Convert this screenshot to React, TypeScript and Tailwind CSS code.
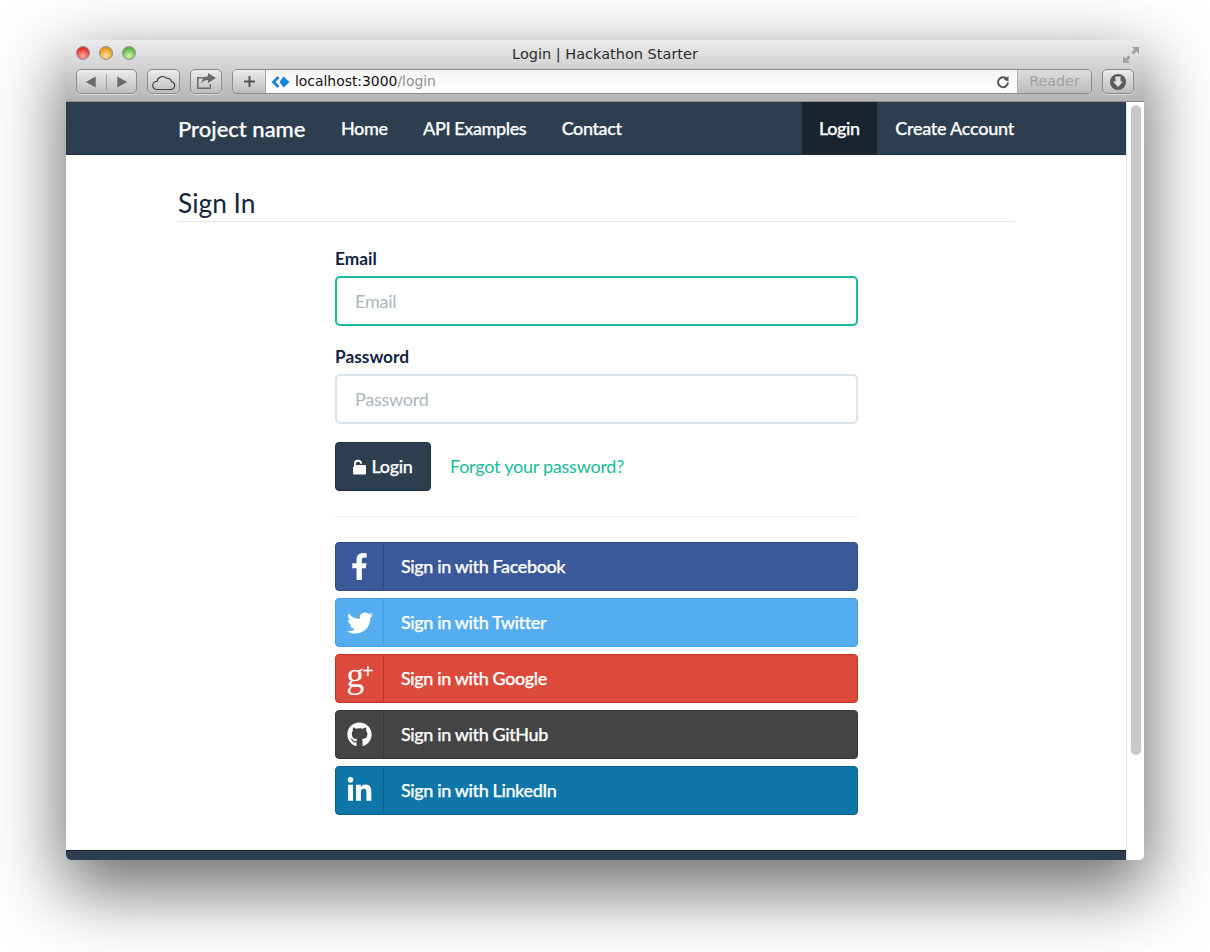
import React from "react";
import { FaFacebookF, FaTwitter, FaGithub, FaLinkedinIn } from "react-icons/fa";

const ui = "font-['DejaVu_Sans',sans-serif]";

function Tool({ className, children }: { className: string; children: React.ReactNode }) {
  return (
    <div className={`h-[25px] flex items-center justify-center rounded-[5px] border border-[#8a8a8a] bg-gradient-to-b from-[#ececec] to-[#bdbdbd] shadow-[0_1px_0_rgba(255,255,255,0.5)] ${className}`}>
      {children}
    </div>
  );
}

function Dot({ c }: { c: string }) {
  return <span className={`w-[14px] h-[14px] rounded-full border border-[#8f8f8f] ${c}`} />;
}

function Social({ color, border, icon, label }: { color: string; border: string; icon: React.ReactNode; label: string }) {
  return (
    <a className={`flex h-[49px] items-center rounded-[4px] border text-white text-[18px] font-medium tracking-[-0.38px] [-webkit-text-stroke:0.25px_white] ${color} ${border}`}>
      <span className={`w-[48px] h-full shrink-0 flex items-center justify-center border-r [-webkit-text-stroke:0] ${border}`}>{icon}</span>
      <span className="pl-[17px]">{label}</span>
    </a>
  );
}

function Field({ label, placeholder, focus }: { label: string; placeholder: string; focus?: boolean }) {
  return (
    <div>
      <div className="text-[17.300px] font-bold text-[#13233f] leading-[24px]">{label}</div>
      <input
        readOnly
        placeholder={placeholder}
        className={`mt-[5px] block w-full h-[50px] rounded-[5px] border-2 pl-[18px] text-[18px] tracking-[-0.25px] bg-white outline-none placeholder:text-[#acb6c0] ${focus ? "border-[#1abc9c]" : "border-[#dce4ec]"}`}
      />
    </div>
  );
}

export default function App() {
  return (
    <div className="w-[1210px] h-[952px] bg-white pt-[40px] pl-[66px] overflow-hidden font-['Lato',sans-serif]">
      <div className="w-[1078px] h-[820px] rounded-[5px] overflow-hidden flex flex-col shadow-[0_26px_70px_4px_rgba(0,0,0,0.58)]">
        {/* browser chrome */}
        <div className={`h-[62px] shrink-0 flex flex-col px-[10px] bg-gradient-to-b from-[#ebebeb] to-[#b4b4b4] border-b border-[#8f8f8f] ${ui}`}>
          <div className="relative h-[29px] shrink-0 flex items-center justify-center">
            <div className="absolute left-0 top-[6px] flex gap-[9px]">
              <Dot c="bg-[radial-gradient(circle_at_50%_75%,#ffb0a8,#e3302a_70%)]" />
              <Dot c="bg-[radial-gradient(circle_at_50%_75%,#ffe3a0,#e69a1c_70%)]" />
              <Dot c="bg-[radial-gradient(circle_at_50%_75%,#d8f5b0,#5db53a_70%)]" />
            </div>
            <span className="text-[14.500px] text-[#2b2b2b]">Login | Hackathon Starter</span>
            <svg className="absolute right-[-6px] top-[6px]" width="18" height="18" viewBox="0 0 18 18" fill="#a2a2a2">
              <path d="M10 1h7v7l-2.400-2.400-3 3-2.200-2.200 3-3zM8 17H1v-7l2.400 2.400 3-3 2.200 2.200-3 3z" />
            </svg>
          </div>
          <div className="flex items-center gap-[10px]">
            <Tool className="w-[61px]">
              <svg width="60" height="16" viewBox="0 0 60 16">
                <path d="M9 8l10-5.500v11z" fill="#6b6b6b" />
                <path d="M30 0v16" stroke="#9a9a9a" />
                <path d="M51 8L41 2.500v11z" fill="#6b6b6b" />
              </svg>
            </Tool>
            <Tool className="w-[33px]">
              <svg width="25" height="18" viewBox="0 0 25 18" fill="none" stroke="#444" strokeWidth="1.200">
                <path d="M5.500 16.500h14a4 4 0 0 0 1-7.900 3.800 3.800 0 0 0-4.800-3.200A5.600 5.600 0 0 0 6 8.400a4 4 0 0 0-.5 8.100z" />
              </svg>
            </Tool>
            <Tool className="w-[32px]">
              <svg width="22" height="17" viewBox="0 0 22 17" fill="#6b6b6b">
                <path d="M2 4h9v1.600H3.600v8.800h11V11H16v5H2z" />
                <path d="M13 0l8 5-8 5V7c-3 0-5 1-6.500 3.500C7 6 9.500 3.500 13 3.200z" />
              </svg>
            </Tool>
            <div className="h-[25px] flex-1 flex rounded-[5px] border border-[#8a8a8a] overflow-hidden">
              <div className="w-[33px] shrink-0 flex items-center justify-center border-r border-[#a5a5a5] bg-gradient-to-b from-[#ececec] to-[#bdbdbd]">
                <svg width="13" height="13" viewBox="0 0 13 13" fill="#555">
                  <path d="M5.500 1h2v4.500H12v2H7.500V12h-2V7.500H1v-2h4.500z" />
                </svg>
              </div>
              <div className="flex-1 flex items-center bg-gradient-to-b from-[#f4f4f4] to-white pl-[5px] pr-[7px]">
                <svg width="20" height="14" viewBox="0 0 20 14" fill="#1a83d6">
                  <path d="M6.500 1L0.500 7l6 6 2-2-4-4 4-4z" />
                  <path d="M12.500 1.500l6 5.500-6 5.500-4-5.500z" />
                </svg>
                <span className="ml-[4px] text-[13.900px] text-[#111]">localhost:3000<span className="text-[#8f8f8f]">/login</span></span>
                <svg className="ml-auto" width="14" height="14" viewBox="0 0 14 14" fill="none">
                  <path d="M11 4.200A5 5 0 1 0 12 7.500" stroke="#555" strokeWidth="2" />
                  <path d="M8 4.800L12.500 1v5.500z" fill="#555" />
                </svg>
              </div>
              <div className="w-[74px] shrink-0 flex items-center justify-center border-l border-[#b5b5b5] bg-gradient-to-b from-[#dedede] to-[#bcbcbc] text-[14.300px] text-[#a2a2a2]">
                Reader
              </div>
            </div>
            <Tool className="w-[32px]">
              <svg width="18" height="18" viewBox="0 0 18 18">
                <circle cx="9" cy="9" r="8" fill="#5c5c5c" />
                <path d="M6.500 3.500h5v5H14L9 14 4 8.500h2.500z" fill="#e2e2e2" />
              </svg>
            </Tool>
          </div>
        </div>

        <div className="flex-1 min-h-0 flex">
          {/* page */}
          <div className="w-[1060px] flex flex-col bg-white">
            <nav className="h-[53px] shrink-0 bg-[#2c3e50] border-b border-[#1f2e3d] text-white text-[18px] font-medium tracking-[-0.4px] [-webkit-text-stroke:0.25px_white]">
              <div className="w-[836px] h-full ml-[112px] flex items-center">
                <span className="text-[22px] tracking-normal w-[163px]">Project name</span>
                <div className="flex gap-[35.500px]">
                  <span>Home</span>
                  <span>API Examples</span>
                  <span>Contact</span>
                </div>
                <div className="ml-auto flex h-full items-center">
                  <span className="h-full flex items-center px-[17.500px] bg-[#1a242f]">Login</span>
                  <span className="pl-[18px] tracking-[-0.25px]">Create Account</span>
                </div>
              </div>
            </nav>

            <main className="flex-1 min-h-0">
              <div className="w-[837px] ml-[112px]">
                <h1 className="pt-[30px] h-[67px] text-[26.300px] leading-[36px] text-[#13233f] border-b border-[#e3e6e8]">Sign In</h1>
                <div className="w-[523px] ml-[157px] mt-[25px]">
                  <Field label="Email" placeholder="Email" focus />
                  <div className="h-[19px]" />
                  <Field label="Password" placeholder="Password" />
                  <div className="mt-[18px] flex items-center">
                    <button className="w-[96px] h-[49px] rounded-[4px] bg-[#2c3e50] border border-[#1f2e3d] text-white text-[18px] font-medium tracking-[-0.3px] [-webkit-text-stroke:0.25px_white] flex items-center justify-center gap-[5px]">
                      <svg width="13" height="16" viewBox="0 0 13 16" fill="#fff">
                        <path d="M1 8V5a4 4 0 0 1 8-0.300H7.200A2.200 2.200 0 0 0 2.800 5v1h9.200a1 1 0 0 1 1 1v7.500a1 1 0 0 1-1 1H1a1 1 0 0 1-1-1V7.500z" />
                      </svg>
                      Login
                    </button>
                    <span className="ml-[19px] text-[18px] tracking-[-0.24px] text-[#18bc9c]">Forgot your password?</span>
                  </div>
                  <div className="mt-[25px] mb-[25px] h-px bg-[#ecf0f1]" />
                  <div className="flex flex-col gap-[7px]">
                    <Social color="bg-[#3b5998]" border="border-[#30487b]" icon={<FaFacebookF size={27} />} label="Sign in with Facebook" />
                    <Social color="bg-[#55acee]" border="border-[#3f9fe8]" icon={<FaTwitter size={26} />} label="Sign in with Twitter" />
                    <Social
                      color="bg-[#dc4a3c]"
                      border="border-[#c23321]"
                      icon={<span aria-hidden="true" className="font-['Liberation_Serif',serif] tracking-normal text-[36px] leading-none -mt-[8px] ml-[1px]">g<span className="text-[20px] align-[9px] -ml-[2px] font-bold">+</span></span>}
                      label="Sign in with Google"
                    />
                    <Social color="bg-[#444444]" border="border-[#373737]" icon={<FaGithub size={25} />} label="Sign in with GitHub" />
                    <Social color="bg-[#0e76a8]" border="border-[#0b6189]" icon={<FaLinkedinIn size={27} />} label="Sign in with LinkedIn" />
                  </div>
                </div>
              </div>
            </main>

            <div className="h-[10px] shrink-0 bg-[#2c3e50] border-t border-[#16202b]" />
          </div>

          {/* scrollbar */}
          <div className="w-[18px] shrink-0 bg-white border-l border-[#e6e6e6] pl-[4px] pt-[3px]">
            <div className="w-[10px] h-[650px] rounded-full bg-[#c8c8c8]" />
          </div>
        </div>
      </div>
    </div>
  );
}
